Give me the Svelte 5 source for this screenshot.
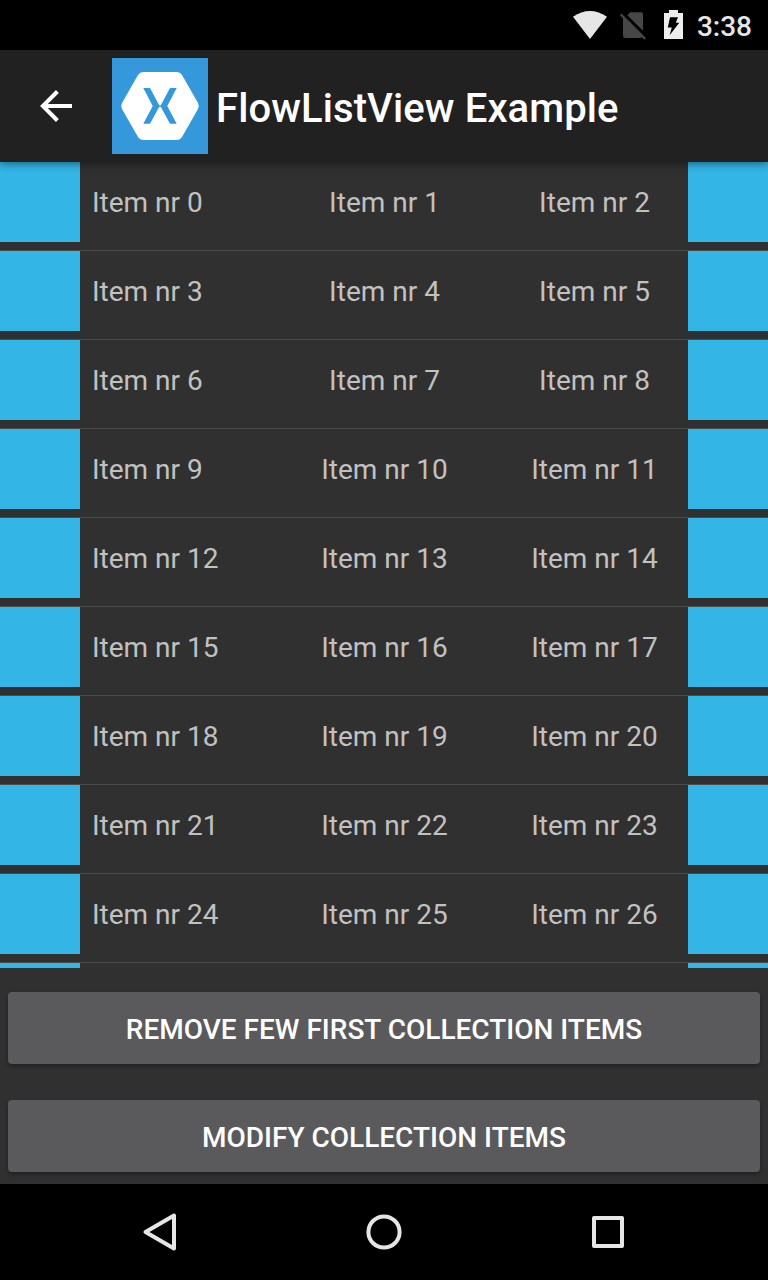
<script>
  const rows = Array.from({ length: 9 }, (_, r) => [0, 1, 2].map((c) => `Item nr ${r * 3 + c}`));
</script>

<div class="screen">
  <div class="status">
    <svg class="icons" width="124" height="50" viewBox="0 0 124 50">
      <path d="M13 16.8Q30 5.2 47 16.8L30 39Z" fill="#e6e6e6" />
      <path d="M67.300 15.200L70.200 12.200H81Q83 12.200 83 14.200V30.800Z" fill="#474747" />
      <path d="M63 16.700L82 35.700V36.500Q81.500 38 80 38H65.500Q63 38 63 35.500Z" fill="#474747" />
      <path d="M60.700 14.400L85.200 38.900" stroke="#474747" stroke-width="2.200" />
      <path d="M104 13H109V10H118V13H123V39H104Z" fill="#eee" />
      <path d="M110 17.2H118L115.8 22.7H119.3L109.600 35.300L111.800 27.500H107.800Z" fill="#000" />
    </svg>
    <span class="clock">3:38</span>
  </div>
  <header>
    <svg class="back" width="32" height="32" viewBox="0 0 32 32" fill="none" stroke="#fff" stroke-width="4">
      <path d="M32 16H4M17.4 1.5L2.9 16L17.4 30.5" />
    </svg>
    <svg class="logo" width="96" height="96" viewBox="0 0 96 96">
      <rect width="96" height="96" fill="#3498db" />
      <path d="M31.5 14H64.5Q68 14 70 17L86 45Q87.5 48 86 51L70 79Q68 82 64.5 82H31.5Q28 82 26 79L10 51Q8.500 48 10 45L26 17Q28 14 31.5 14Z" fill="#fff" />
      <path d="M31.3 30H37.3Q38 30 38.400 30.700L47.100 46.900L48 47.500L48.900 46.900L57.600 30.700Q58 30 58.700 30H64.700L55.300 48L64.700 65.800H58.700Q58 65.800 57.600 65.100L48.900 49.100L48 48.500L47.100 49.100L38.400 65.100Q38 65.800 37.300 65.800H31.300L40.700 48Z" fill="#3498db" />
    </svg>
    <h1>FlowListView Example</h1>
  </header>
  <main>
    {#each rows as row}
      <div class="row">
        <i></i>
        {#each row as item}<span>{item}</span>{/each}
        <i></i>
      </div>
    {/each}
    <div class="row peek"><i></i><i></i></div>
  </main>
  <div class="actions">
    <button>REMOVE FEW FIRST COLLECTION ITEMS</button>
    <button>MODIFY COLLECTION ITEMS</button>
  </div>
  <nav>
    <svg width="48" height="48" viewBox="0 0 48 48"><path d="M38 7.500V40.500L9.500 24Z" /></svg>
    <svg width="48" height="48" viewBox="0 0 48 48"><circle cx="24" cy="24" r="15.600" /></svg>
    <svg width="48" height="48" viewBox="0 0 48 48"><rect x="10" y="10" width="28" height="28" /></svg>
  </nav>
</div>

<style>
  :global(body) { margin: 0; background: #303030; }
  .screen {
    width: 768px;
    height: 1280px;
    display: flex;
    flex-direction: column;
    overflow: hidden;
    background: #303030;
    font-family: Roboto, sans-serif;
  }
  .status {
    height: 50px;
    flex: none;
    box-sizing: border-box;
    padding-right: 16px;
    display: flex;
    align-items: center;
    justify-content: flex-end;
    background: #000;
  }
  .icons { margin-right: 13px; }
  .clock { color: #e6e6e6; font-size: 28px; font-weight: 500; line-height: 46px; padding-top: 4px; }
  header {
    height: 112px;
    flex: none;
    display: flex;
    align-items: center;
    background: #212121;
    box-shadow: 0 2px 8px rgba(0, 0, 0, 0.45);
    z-index: 1;
  }
  .back { margin: 0 40px; }
  h1 { margin: 6px 0 0 8px; color: #fff; font-size: 40px; font-weight: 500; line-height: 48px; letter-spacing: 0.1px; }
  main { height: 806px; flex: none; overflow: hidden; }
  .row {
    height: 88px;
    display: grid;
    grid-template-columns: 80px 199px 210px 199px 80px;
    border-bottom: 1px solid #4b4b4b;
  }
  .peek { height: 5px; border: 0; grid-template-columns: 80px 80px; justify-content: space-between; }
  .peek i { height: 5px; }
  i { height: 80px; background: #33b5e5; }
  .row span { color: #c1c1c1; font-size: 28px; line-height: 82px; text-align: center; white-space: nowrap; }
  .row span:nth-child(2) { text-align: left; padding-left: 12px; }
  .row span:nth-child(3) { padding-left: 1px; }
  .row span:nth-child(4) { padding-left: 12px; }
  .actions { flex: 1; padding: 24px 8px 12px; display: flex; flex-direction: column; gap: 36px; }
  button {
    height: 72px;
    border: 0;
    padding: 4px 0 0;
    border-radius: 4px;
    background: #5a5a5c;
    box-shadow: 0 2px 4px rgba(0, 0, 0, 0.35);
    color: #fff;
    font: 500 28px/40px Roboto, sans-serif;
  }
  nav {
    height: 96px;
    flex: none;
    box-sizing: border-box;
    padding: 0 136px;
    display: flex;
    align-items: center;
    justify-content: space-between;
    background: #000;
    z-index: 1;
  }
  nav svg { fill: none; stroke: #e6e6e6; stroke-width: 4; stroke-linejoin: round; }
</style>
